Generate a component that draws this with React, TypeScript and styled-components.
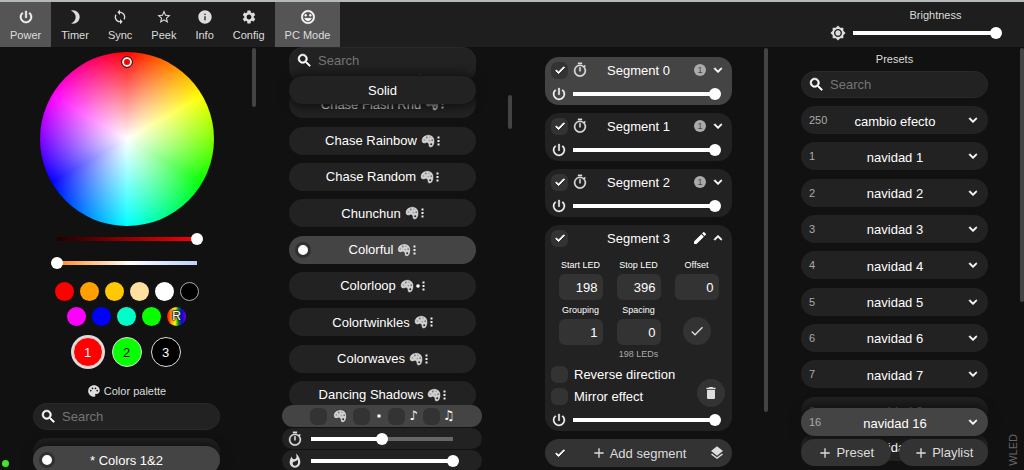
import React, { useState } from 'react';
import styled, { createGlobalStyle, css } from 'styled-components';
import {
  MdAdd,
  MdBrightness3,
  MdBrightness7,
  MdCheck,
  MdDelete,
  MdEdit,
  MdExpandLess,
  MdExpandMore,
  MdInfo,
  MdLayers,
  MdOutlineTimer,
  MdPalette,
  MdPowerSettingsNew,
  MdSearch,
  MdSettings,
  MdStarBorder,
  MdSync,
  MdTagFaces,
  MdWhatshot,
} from 'react-icons/md';

const GlobalStyle = createGlobalStyle`
  *, *::before, *::after { box-sizing: border-box; }
  html, body { margin: 0; background: #111; }
  body, button, input {
    font-family: "Liberation Sans", Arial, sans-serif;
    font-size: 13px;
    color: #fff;
  }
  button { border: 0; padding: 0; background: none; cursor: pointer; }
  svg { display: block; flex: none; }
  svg path[fill="none"] { stroke: none; }
`;

/* ---------- page frame ---------- */

const Page = styled.div`
  height: 100vh;
  display: grid;
  grid-template-rows: 47px minmax(0, 1fr);
  overflow: hidden;
  position: relative;
`;

const TopBar = styled.header`
  display: flex;
  justify-content: space-between;
  background: #1e1e1e;
  border-top: 2px solid #b4bab8;
`;

const Tabs = styled.nav`
  display: flex;
  gap: 1px;
`;

const TabButton = styled.button<{ $on?: boolean }>`
  display: flex;
  flex-direction: column;
  align-items: center;
  gap: 3px;
  padding: 7px ${(p) => (p.$on ? 10 : 9)}px 0;
  font-size: 11px;
  line-height: 14px;
  color: #ddd;
  background: ${(p) => (p.$on ? '#555' : 'transparent')};
  svg { color: ${(p) => (p.$on ? '#fff' : '#ddd')}; }
`;

const BrightnessBox = styled.div`
  display: grid;
  grid-template-columns: 17px 155px 22px;
  grid-template-rows: 14px 14px;
  row-gap: 4px;
  padding-top: 6px;
  align-items: center;
  color: #ddd;
`;

const BrightnessLabel = styled.label`
  grid-column: 2 / 4;
  text-align: center;
  font-size: 11px;
  line-height: 14px;
`;

const Columns = styled.main`
  display: grid;
  grid-template-columns: repeat(4, minmax(0, 1fr));
  min-height: 0;
`;

const Column = styled.section`
  display: grid;
  grid-template-columns: minmax(0, 1fr) 4px;
  grid-template-rows: minmax(0, 1fr);
  min-height: 0;
  overflow: hidden;
`;

const Layer = styled.div`
  grid-area: 1 / 1;
  display: flex;
  flex-direction: column;
  padding: 0 32px 0 33px;
  min-height: 0;
`;

const ScrollThumb = styled.div<{ $top: number; $size: number }>`
  grid-area: 1 / 2;
  margin-top: ${(p) => p.$top}px;
  height: ${(p) => p.$size}%;
  border-radius: 2px;
  background: #444;
`;

/* ---------- shared controls ---------- */

const Range = styled.input.attrs({ type: 'range' })<{ $track: string }>`
  appearance: none;
  display: block;
  flex: 1;
  width: 100%;
  min-width: 0;
  height: 12px;
  margin: 0;
  background: transparent;

  &::-webkit-slider-runnable-track {
    height: 12px;
    background: ${(p) => p.$track};
  }
  &::-webkit-slider-thumb {
    appearance: none;
    width: 12px;
    height: 12px;
    border-radius: 50%;
    background: #fff;
  }
`;

function Slider({ label, id, start = 100, track }: { label?: string; id?: string; start?: number; track?: string }) {
  const [value, setValue] = useState(start);
  const fill = `linear-gradient(#fff, #fff) 6px 4px / calc((100% - 12px) * ${value / 100}) 4px no-repeat`;
  const rest = 'linear-gradient(#666, #666) 6px 4px / calc(100% - 12px) 4px no-repeat';
  const colored = track && `${track} 6px 4px / calc(100% - 12px) 4px no-repeat`;
  return (
    <Range
      id={id}
      aria-label={label}
      value={value}
      onChange={(e) => setValue(Number(e.target.value))}
      $track={colored || `${fill}, ${rest}`}
    />
  );
}

const SearchBox = styled.label`
  display: flex;
  align-items: center;
  gap: 5px;
  flex: none;
  height: 27px;
  padding: 0 6px;
  border: 1px solid #292929;
  border-radius: 14px;
  background: #222;
`;

const SearchInput = styled.input`
  flex: 1;
  min-width: 0;
  padding: 0;
  border: 0;
  outline: 0;
  background: transparent;
  &::placeholder { color: #757575; opacity: 1; }
`;

function Search({ label }: { label: string }) {
  return (
    <SearchBox>
      <MdSearch size={17} stroke="currentColor" strokeWidth={1} />
      <SearchInput aria-label={label} placeholder="Search" />
    </SearchBox>
  );
}

const PillLabel = styled.label<{ $on?: boolean; $raised?: boolean }>`
  display: grid;
  grid-template-columns: 16px minmax(0, 1fr) 16px;
  align-items: center;
  flex: none;
  height: 28px;
  padding: 0 6px;
  border-radius: 14px;
  background: ${(p) => (p.$on ? '#444' : '#222')};
  ${(p) => p.$raised && css`box-shadow: 0 0 10px 3px #111;`}
`;

const Radio = styled.input.attrs({ type: 'radio' })`
  appearance: none;
  width: 16px;
  height: 16px;
  margin: 0;
  border-radius: 50%;
  &:checked {
    background: #fff;
    border: 3px solid #303030;
  }
`;

const PillText = styled.span`
  display: flex;
  justify-content: center;
  align-items: center;
  gap: 4px;
  white-space: nowrap;
`;

const Marks = styled.span`
  display: flex;
  align-items: center;
  gap: 2px;
`;

const TickCell = styled.span`
  display: inline-grid;
  place-items: center;
  flex: none;
  color: #fff;
  svg { grid-area: 1 / 1; pointer-events: none; visibility: hidden; }
  input:checked + svg { visibility: visible; }
`;

const TickInput = styled.input.attrs({ type: 'checkbox' })`
  grid-area: 1 / 1;
  appearance: none;
  width: 17px;
  height: 17px;
  margin: 0;
  border-radius: 6px;
  background: #333;
`;

function Tick({ label, checked }: { label?: string; checked?: boolean }) {
  return (
    <TickCell>
      <TickInput aria-label={label} defaultChecked={checked} />
      <MdCheck size={12} stroke="currentColor" strokeWidth={2} />
    </TickCell>
  );
}

const Caption = styled.h2`
  display: flex;
  justify-content: center;
  align-items: center;
  gap: 3px;
  flex: none;
  margin: 0;
  font-size: 11px;
  font-weight: 400;
  line-height: 14px;
  color: #ddd;
`;

/* ---------- drawings ---------- */

function PaintPalette() {
  return (
    <svg width="14" height="14" viewBox="0 0 14 14" aria-hidden="true">
      <path
        d="M7.400.7C3.600.7.6 3.200.5 6.300c0 2.200 1.200 3.500 3 3.300 1.300-.2 1.800-.9 2.900-.6 1.500.4.7 2.400 1.600 3.700.8 1.100 2.400 1.100 3.600.1C12.900 11.600 13.600 9.400 13.600 7 13.600 3.200 11 .7 7.400.7z"
        fill="#cfcfcf"
        stroke="#0c0c0c"
        strokeWidth="0.500"
      />
      <circle cx="3.400" cy="6" r="0.900" fill="#a2a2a2" />
      <circle cx="5.800" cy="3.500" r="0.900" fill="#777" />
      <circle cx="9" cy="3.200" r="0.900" fill="#aaa" />
      <circle cx="11.200" cy="6.200" r="0.900" fill="#777" />
      <circle cx="8.300" cy="6.600" r="0.800" fill="#999" />
      <circle cx="10.200" cy="10.300" r="1" fill="#2a2a2a" />
    </svg>
  );
}

function Dots() {
  return (
    <svg width="3" height="10" viewBox="0 0 3 10" fill="#eee" aria-hidden="true">
      <rect x="0.500" y="0.500" width="2" height="2" />
      <rect x="0.500" y="4" width="2" height="2" />
      <rect x="0.500" y="7.500" width="2" height="2" />
    </svg>
  );
}

function Bullet() {
  return (
    <svg width="4" height="4" viewBox="0 0 4 4" fill="#fff" aria-hidden="true">
      <circle cx="2" cy="2" r="1.800" />
    </svg>
  );
}

/* ---------- colours column ---------- */

const ColorStack = styled(Layer)`
  align-items: stretch;
  padding-top: 5px;
`;

const Wheel = styled.div`
  align-self: center;
  flex: none;
  width: 174px;
  height: 174px;
  padding-top: 4px;
  border-radius: 50%;
  background:
    radial-gradient(closest-side, #fff, transparent),
    conic-gradient(#f00, #ff0, #0f0, #0ff, #00f, #f0f, #f00);
`;

const WheelHandle = styled.div`
  width: 12px;
  height: 12px;
  margin: 0 auto;
  border-radius: 50%;
  border: 1px solid #222;
  background: #f00;
  box-shadow: inset 0 0 0 2px #eee;
`;

const ColorSliders = styled.div`
  display: flex;
  flex-direction: column;
  align-self: center;
  gap: 12px;
  width: 152px;
  margin-top: 7px;
  input { flex: none; }
`;

const Swatches = styled.div`
  display: flex;
  flex-wrap: wrap;
  justify-content: center;
  align-self: center;
  gap: 6px;
  width: 152px;
  margin-top: 13px;
`;

const Swatch = styled.button<{ $fill: string; $outlined?: boolean }>`
  width: 19px;
  height: 19px;
  border-radius: 50%;
  background: ${(p) => p.$fill};
  border: ${(p) => (p.$outlined ? '1px solid #aaa' : '0')};
  font-size: 12px;
  line-height: 19px;
  text-shadow: 1px 0 1px #222, -1px 0 1px #222, 0 1px 1px #222, 0 -1px 1px #222;
`;

const Slots = styled.div`
  display: flex;
  justify-content: center;
  gap: 9px;
  margin: 11px 0 17px;
`;

const Slot = styled.button<{ $fill: string; $ink?: string; $on?: boolean }>`
  width: 30px;
  height: 30px;
  border-radius: 50%;
  border: 1px solid #ddd;
  background: ${(p) => p.$fill};
  color: ${(p) => p.$ink || '#fff'};
  box-shadow: ${(p) => (p.$on ? '0 0 0 2px #ddd' : 'none')};
`;

const PaletteSearch = styled.div`
  margin-top: 5px;
`;

const PaletteList = styled.div`
  display: grid;
  margin-top: 8px;
  > * { grid-area: 1 / 1; }
  > * + * { margin-top: 8px; }
`;

const SWATCHES: [string, string][] = [
  ['Red', '#ff0000'],
  ['Orange', '#ffa000'],
  ['Amber', '#ffc800'],
  ['Warm white', '#ffe0a0'],
  ['White', '#ffffff'],
  ['Black', '#000000'],
  ['Magenta', '#ff00ff'],
  ['Blue', '#0000ff'],
  ['Teal', '#00ffc8'],
  ['Green', '#08ff00'],
];

function ColorColumn() {
  return (
    <Column>
      <ColorStack>
        <Wheel>
          <WheelHandle />
        </Wheel>
        <ColorSliders>
          <Slider label="Value" track="linear-gradient(90deg, #200000, #f00)" />
          <Slider label="Temperature" start={0} track="linear-gradient(90deg, #ff8a1c, #fff 52%, #bcd0ff)" />
        </ColorSliders>
        <Swatches>
          {SWATCHES.map(([name, fill]) => (
            <Swatch key={name} aria-label={name} $fill={fill} $outlined={name === 'Black'} />
          ))}
          <Swatch $fill="linear-gradient(90deg, #f00, #ff8c00 22%, #ff0 42%, #008a10 60%, #00f 78%, #80c)">R</Swatch>
        </Swatches>
        <Slots>
          <Slot $fill="#f00" $on>1</Slot>
          <Slot $fill="#08ff00" $ink="#111">2</Slot>
          <Slot $fill="#000">3</Slot>
        </Slots>
        <Caption>
          <MdPalette size={14} />
          Color palette
        </Caption>
        <PaletteSearch>
          <Search label="Search palettes" />
        </PaletteSearch>
        <PaletteList>
          <PillLabel>
            <Radio name="palette" />
          </PillLabel>
          <PillLabel $on $raised>
            <Radio name="palette" defaultChecked />
            <PillText>* Colors 1&amp;2</PillText>
          </PillLabel>
        </PaletteList>
      </ColorStack>
      <ScrollThumb $top={1} $size={14} />
    </Column>
  );
}

/* ---------- effects column ---------- */

const EffectList = styled(Layer)`
  justify-content: space-between;
  padding-top: 7px;
  padding-bottom: 61px;
`;

const EffectHead = styled(Layer)`
  align-self: start;
  gap: 2px;
  z-index: 1;
`;

const EffectFoot = styled(Layer)`
  align-self: end;
  gap: 1px;
  padding: 0 26px;
  margin-bottom: -1px;
  z-index: 1;
`;

const FilterRow = styled.div`
  display: flex;
  justify-content: center;
  align-items: center;
  gap: 3px;
  height: 22px;
  border-radius: 11px;
  background: #444;
`;

const Filter = styled.label`
  display: flex;
  align-items: center;
  gap: 3px;
`;

const FilterMark = styled.span<{ $wide?: boolean }>`
  display: grid;
  place-items: center;
  width: ${(p) => (p.$wide ? 20 : 12)}px;
  font-family: "DejaVu Sans", sans-serif;
  font-size: 13px;
  line-height: 16px;
`;

const SliderRow = styled.div`
  display: flex;
  align-items: center;
  gap: 2px;
  height: 21px;
  padding: 0 23px 0 5px;
  border-radius: 11px;
  background: #222;
  color: #ddd;
`;

const EFFECTS = [
  'Chase Flash',
  'Chase Flash Rnd',
  'Chase Rainbow',
  'Chase Random',
  'Chunchun',
  'Colorful',
  'Colorloop',
  'Colortwinkles',
  'Colorwaves',
  'Dancing Shadows',
];

function EffectColumn() {
  return (
    <Column>
      <EffectList>
        {EFFECTS.map((name) => (
          <PillLabel key={name} $on={name === 'Colorful'}>
            <Radio name="effect" defaultChecked={name === 'Colorful'} />
            <PillText>
              {name}
              <Marks>
                <PaintPalette />
                {name === 'Colorloop' && <Bullet />}
                <Dots />
              </Marks>
            </PillText>
          </PillLabel>
        ))}
      </EffectList>
      <EffectHead>
        <Search label="Search effects" />
        <PillLabel $raised>
          <Radio name="effect" />
          <PillText>Solid</PillText>
        </PillLabel>
      </EffectHead>
      <EffectFoot>
        <FilterRow>
          <Filter>
            <Tick label="Uses palette" />
            <FilterMark $wide><PaintPalette /></FilterMark>
          </Filter>
          <Filter>
            <Tick label="Single pixel" />
            <FilterMark><Bullet /></FilterMark>
          </Filter>
          <Filter>
            <Tick />
            <FilterMark>♪</FilterMark>
          </Filter>
          <Filter>
            <Tick />
            <FilterMark>♫</FilterMark>
          </Filter>
        </FilterRow>
        <SliderRow>
          <MdOutlineTimer size={16} stroke="currentColor" strokeWidth={0.5} />
          <Slider label="Effect speed" start={50} />
        </SliderRow>
        <SliderRow>
          <MdWhatshot size={16} />
          <Slider label="Effect intensity" />
        </SliderRow>
      </EffectFoot>
      <ScrollThumb $top={48} $size={8} />
    </Column>
  );
}

/* ---------- segments column ---------- */

const SegmentStack = styled(Layer)`
  gap: 8px;
  padding-top: 10px;
`;

const Card = styled.article<{ $on?: boolean }>`
  flex: none;
  border-radius: 14px;
  background: ${(p) => (p.$on ? '#444' : '#222')};
`;

const CardHead = styled.div`
  display: grid;
  grid-template-columns: 1fr auto 1fr;
  align-items: center;
  height: 26px;
  padding: 0 6px;
`;

const Side = styled.div<{ $end?: boolean }>`
  display: flex;
  align-items: center;
  gap: ${(p) => (p.$end ? 2 : 4)}px;
  justify-content: ${(p) => (p.$end ? 'flex-end' : 'flex-start')};
  color: ${(p) => (p.$end ? '#fff' : '#ddd')};
`;

const Title = styled.h3`
  margin: 0;
  font-size: 13px;
  font-weight: 400;
`;

const Badge = styled.span`
  width: 12px;
  height: 12px;
  margin: 0 2px;
  border-radius: 50%;
  background: #aaa;
  color: #444;
  font-size: 9px;
  line-height: 12px;
  text-align: center;
`;

const CardSlider = styled.div`
  display: flex;
  align-items: center;
  height: 22px;
  padding: 0 11px 0 6px;
`;

const Fields = styled.div`
  display: grid;
  grid-template-columns: repeat(3, 44px);
  column-gap: 14px;
  row-gap: 4px;
  justify-content: center;
  padding-top: 8px;
`;

const Field = styled.label`
  display: grid;
  row-gap: 3px;
  justify-items: center;
  font-size: 9px;
  line-height: 12px;
  white-space: nowrap;
`;

const NumberInput = styled.input`
  width: 44px;
  height: 26px;
  padding: 0 5px;
  border: 0;
  border-radius: 6px;
  background: #333;
  text-align: right;
`;

const RoundButton = styled.button`
  display: grid;
  place-items: center;
  align-self: end;
  justify-self: center;
  width: 28px;
  height: 28px;
  border-radius: 50%;
  background: #333;
  color: #ddd;
`;

const LedCount = styled.p`
  margin: 3px 0;
  font-size: 9px;
  line-height: 12px;
  text-align: center;
  color: #aaa;
`;

const OptionsRow = styled.div`
  display: flex;
  justify-content: space-between;
  padding: 0 7px 2px 6px;
`;

const Option = styled.label`
  display: flex;
  align-items: center;
  gap: 6px;
  height: 22px;
`;

const AddSegment = styled.div`
  display: grid;
  grid-template-columns: 17px 1fr 17px;
  align-items: center;
  flex: none;
  height: 28px;
  padding: 0 6px;
  border-radius: 14px;
  background: #333;
  color: #ddd;
`;

const TextButton = styled.button`
  display: flex;
  justify-content: center;
  align-items: center;
  gap: 3px;
  color: #ddd;
`;

function PowerSlider({ label }: { label: string }) {
  return (
    <CardSlider>
      <button aria-label={`${label} power`}>
        <MdPowerSettingsNew size={16} stroke="currentColor" strokeWidth={0.5} />
      </button>
      <Slider label={`${label} brightness`} />
    </CardSlider>
  );
}

function SegmentColumn() {
  return (
    <Column>
      <SegmentStack>
        {['Segment 0', 'Segment 1', 'Segment 2'].map((name, i) => (
          <Card key={name} $on={i === 0}>
            <CardHead>
              <Side>
                <Tick label={name} checked />
                <MdOutlineTimer size={16} stroke="currentColor" strokeWidth={0.5} />
              </Side>
              <Title>{name}</Title>
              <Side $end>
                <Badge>1</Badge>
                <MdExpandMore size={16} stroke="currentColor" strokeWidth={1} />
              </Side>
            </CardHead>
            <PowerSlider label={name} />
          </Card>
        ))}
        <Card>
          <CardHead>
            <Side>
              <Tick label="Segment 3" checked />
            </Side>
            <Title>Segment 3</Title>
            <Side $end>
              <MdEdit size={16} />
              <MdExpandLess size={16} stroke="currentColor" strokeWidth={1} />
            </Side>
          </CardHead>
          <Fields>
            <Field>Start LED<NumberInput defaultValue="198" /></Field>
            <Field>Stop LED<NumberInput defaultValue="396" /></Field>
            <Field>Offset<NumberInput defaultValue="0" /></Field>
            <Field>Grouping<NumberInput defaultValue="1" /></Field>
            <Field>Spacing<NumberInput defaultValue="0" /></Field>
            <RoundButton aria-label="Apply">
              <MdCheck size={16} />
            </RoundButton>
          </Fields>
          <LedCount>198 LEDs</LedCount>
          <OptionsRow>
            <div>
              <Option><Tick />Reverse direction</Option>
              <Option><Tick />Mirror effect</Option>
            </div>
            <RoundButton aria-label="Delete segment">
              <MdDelete size={16} />
            </RoundButton>
          </OptionsRow>
          <PowerSlider label="Segment 3" />
        </Card>
        <AddSegment>
          <Tick label="Select all segments" checked />
          <TextButton>
            <MdAdd size={16} />
            Add segment
          </TextButton>
          <MdLayers size={16} />
        </AddSegment>
      </SegmentStack>
      <ScrollThumb $top={1} $size={86} />
    </Column>
  );
}

/* ---------- presets column ---------- */

const PresetStack = styled(Layer)`
  padding-top: 5px;
  padding-bottom: 9px;
`;

const PresetSearch = styled.div`
  margin: 5px 0 8px;
`;

const PresetList = styled.div`
  display: flex;
  flex: 1;
  flex-direction: column;
  justify-content: space-between;
  min-height: 0;
`;

const PresetPill = styled.button<{ $on?: boolean }>`
  display: grid;
  grid-template-columns: 1fr auto 1fr;
  align-items: center;
  flex: none;
  height: 28px;
  padding: 0 7px 0 8px;
  border-radius: 14px;
  background: ${(p) => (p.$on ? '#444' : '#222')};
  ${(p) => p.$on && css`box-shadow: 0 0 8px 4px #111;`}
  svg { justify-self: end; }
`;

const PresetId = styled.span`
  font-size: 11px;
  color: #aaa;
  text-align: left;
`;

const PresetName = styled.span`
  padding-top: 2px;
`;

const PresetFoot = styled(Layer)`
  align-self: end;
  gap: 3px;
  padding-bottom: 4px;
  z-index: 1;
`;

const FootButtons = styled.div`
  display: grid;
  grid-template-columns: 1fr 1fr;
  gap: 8px;
`;

const FootButton = styled(TextButton)`
  height: 27px;
  border-radius: 14px;
  background: #333;
`;

const Preset = ({ id, name, on }: { id: string; name: string; on?: boolean }) => (
  <PresetPill $on={on}>
    <PresetId>{id}</PresetId>
    <PresetName>{name}</PresetName>
    <MdExpandMore size={16} stroke="currentColor" strokeWidth={1} />
  </PresetPill>
);

const NUMBERED = ['1', '2', '3', '4', '5', '6', '7', '8', '9'];

function PresetColumn() {
  return (
    <Column>
      <PresetStack>
        <Caption>Presets</Caption>
        <PresetSearch>
          <Search label="Search presets" />
        </PresetSearch>
        <PresetList>
          <Preset id="250" name="cambio efecto" />
          {NUMBERED.map((n) => (
            <Preset key={n} id={n} name={`navidad ${n}`} />
          ))}
        </PresetList>
      </PresetStack>
      <PresetFoot>
        <Preset id="16" name="navidad 16" on />
        <FootButtons>
          <FootButton><MdAdd size={16} />Preset</FootButton>
          <FootButton><MdAdd size={16} />Playlist</FootButton>
        </FootButtons>
      </PresetFoot>
      <ScrollThumb $top={1} $size={60} />
    </Column>
  );
}

/* ---------- overlays ---------- */

const StatusDot = styled.span`
  position: absolute;
  left: 2px;
  bottom: 3px;
  width: 7px;
  height: 7px;
  border-radius: 50%;
  background: #42e62a;
`;

const Brand = styled.a`
  position: absolute;
  right: 4px;
  bottom: 4px;
  writing-mode: vertical-rl;
  rotate: 180deg;
  font-size: 11px;
  line-height: 14px;
  color: #666;
  text-decoration: none;
`;

const TABS = [
  { name: 'Power', Icon: MdPowerSettingsNew, on: true },
  { name: 'Timer', Icon: MdBrightness3 },
  { name: 'Sync', Icon: MdSync },
  { name: 'Peek', Icon: MdStarBorder },
  { name: 'Info', Icon: MdInfo },
  { name: 'Config', Icon: MdSettings },
  { name: 'PC Mode', Icon: MdTagFaces, on: true },
];

export default function App() {
  return (
    <Page>
      <GlobalStyle />
      <TopBar>
        <Tabs>
          {TABS.map(({ name, Icon, on }) => (
            <TabButton key={name} $on={on}>
              <Icon size={16} stroke="currentColor" strokeWidth={on ? 0.8 : 0} />
              {name}
            </TabButton>
          ))}
        </Tabs>
        <BrightnessBox>
          <BrightnessLabel htmlFor="brightness">Brightness</BrightnessLabel>
          <MdBrightness7 size={16} />
          <Slider id="brightness" />
        </BrightnessBox>
      </TopBar>
      <Columns>
        <ColorColumn />
        <EffectColumn />
        <SegmentColumn />
        <PresetColumn />
      </Columns>
      <StatusDot />
      <Brand href="#wled">WLED</Brand>
    </Page>
  );
}
